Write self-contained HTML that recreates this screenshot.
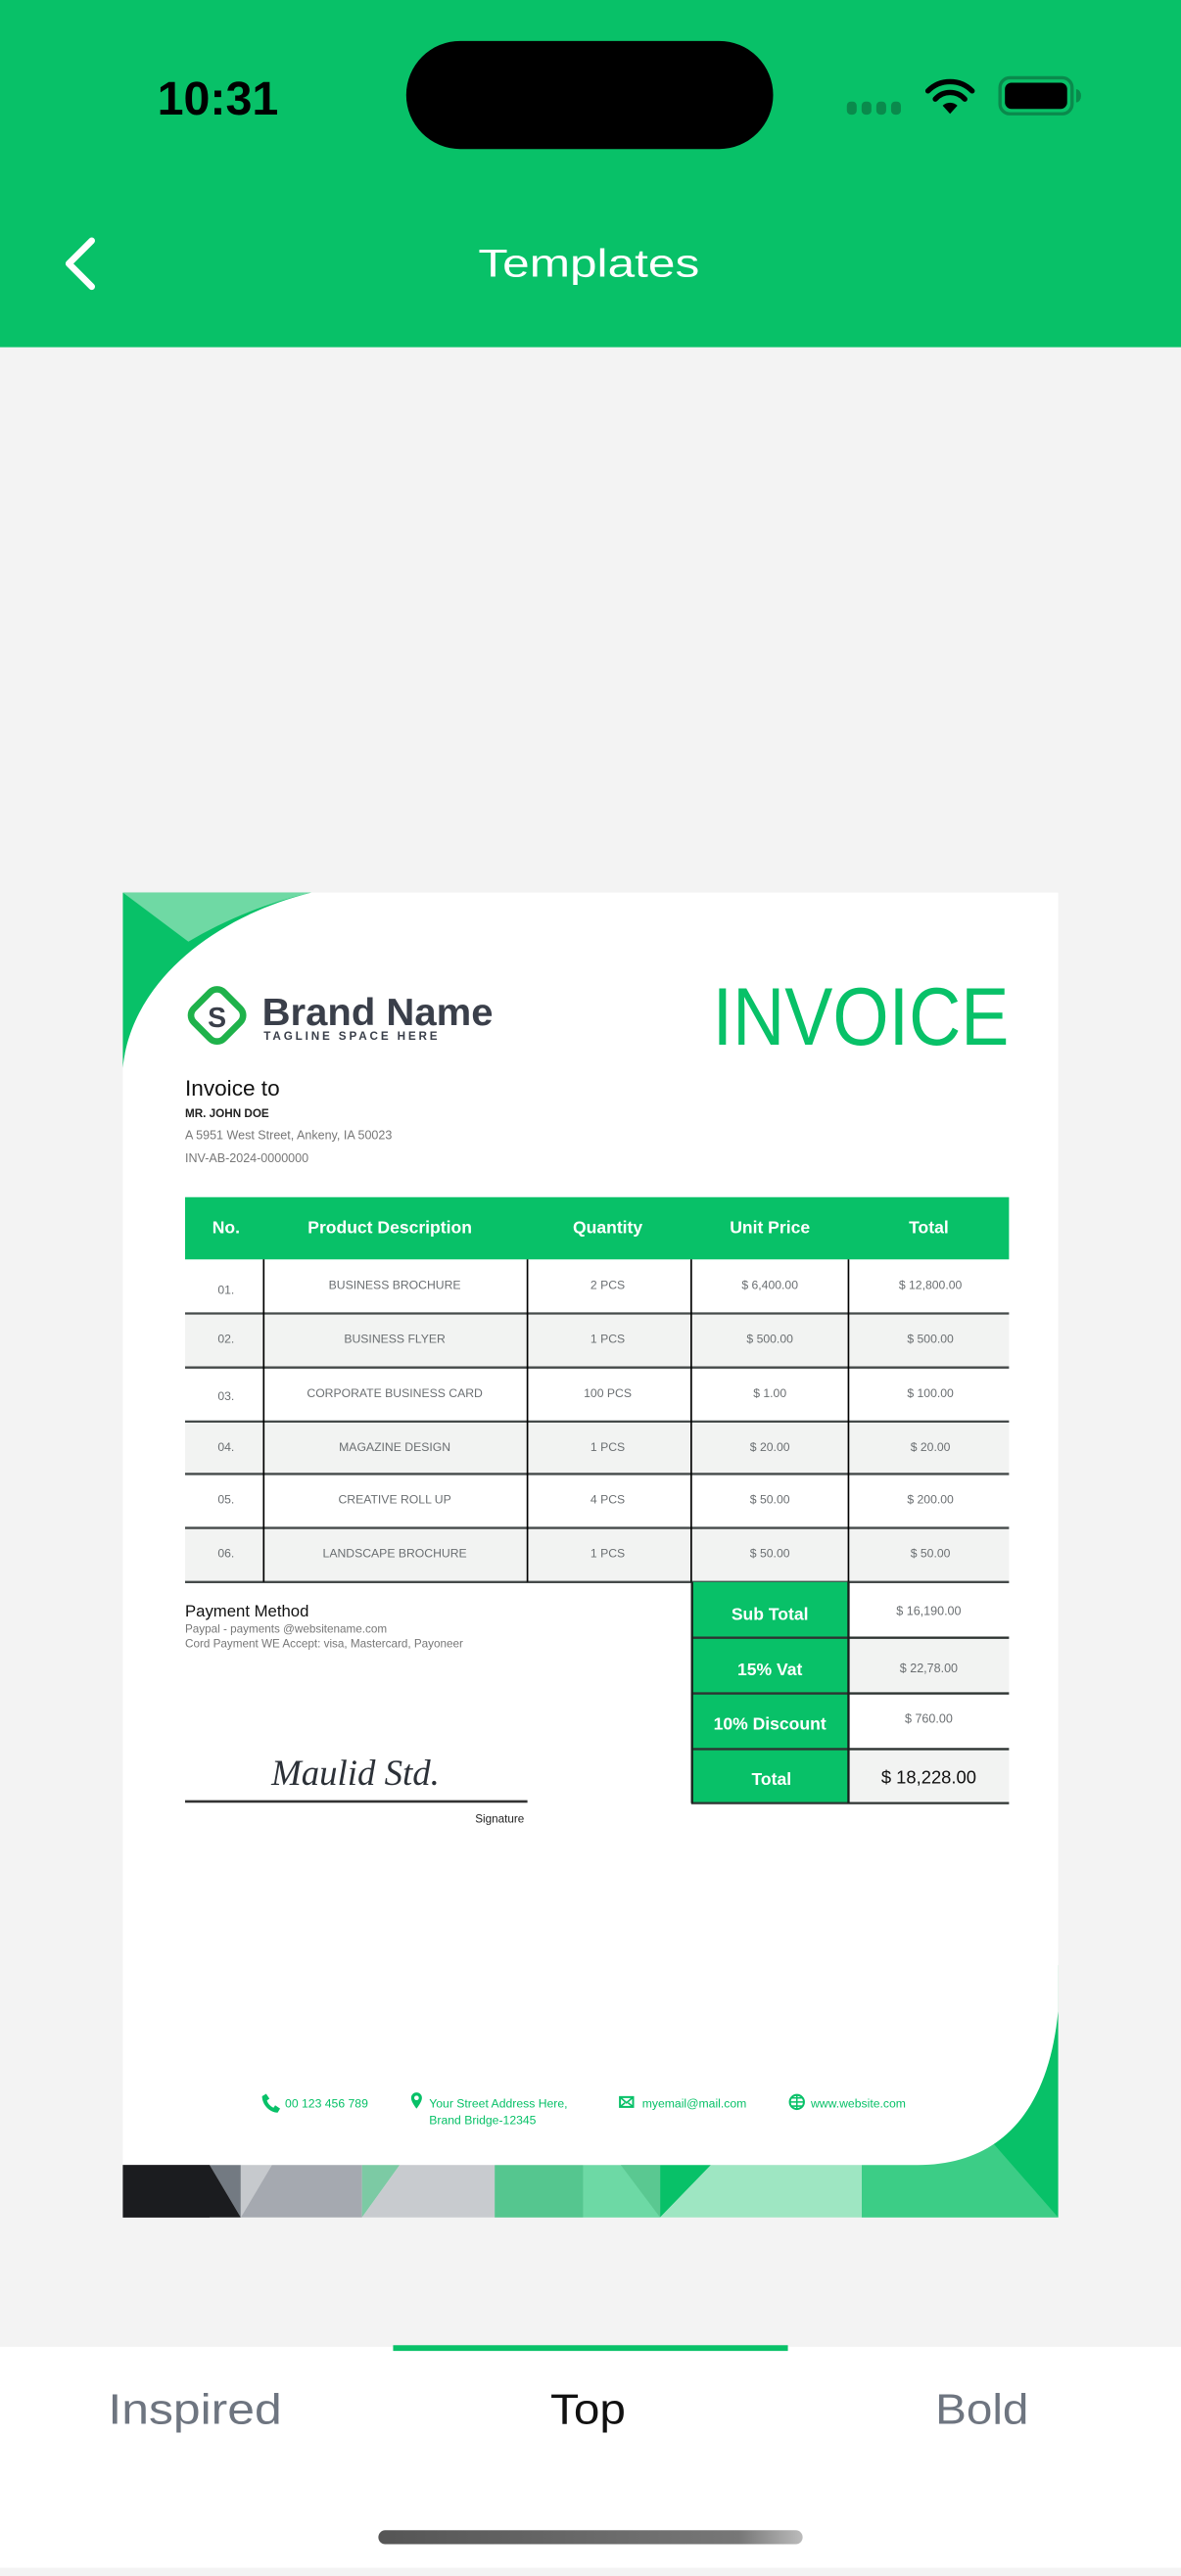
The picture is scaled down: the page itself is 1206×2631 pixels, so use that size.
<!DOCTYPE html>
<html><head><meta charset="utf-8"><style>
html,body{margin:0;padding:0;background:#f3f3f3;}
body{width:1206px;height:2622px;overflow:hidden;position:relative;}
#w{position:absolute;left:0;top:0;width:721px;height:1568px;transform:scale(1.672677);transform-origin:0 0;}
svg text{font-family:"Liberation Sans",sans-serif;}
</style></head><body><div id="w">
<svg width="721" height="1568" viewBox="0 0 721 1568" xmlns="http://www.w3.org/2000/svg">
<rect x="0" y="0" width="721" height="1568" fill="#f3f3f3"/>
<!-- header -->
<rect x="0" y="0" width="721" height="212" fill="#08c168"/>
<text x="96" y="70" font-size="29" font-weight="700" fill="#000" textLength="74" lengthAdjust="spacingAndGlyphs">10:31</text>
<rect x="248" y="25" width="224" height="66" rx="33" fill="#000"/>
<g fill="#0a8a4c"><rect x="517" y="62" width="6" height="8" rx="2.5"/><rect x="526" y="62" width="6" height="8" rx="2.5"/><rect x="535" y="62" width="6" height="8" rx="2.5"/><rect x="544" y="62" width="6" height="8" rx="2.5"/></g>
<g fill="none" stroke="#000" stroke-width="3.2" stroke-linecap="round">
<path d="M566.5 55.5 A19 19 0 0 1 593.5 55.5"/><path d="M571 60.5 A12 12 0 0 1 589 60.5"/></g>
<path d="M575.5 64.5 L580 69.5 L584.5 64.5 A6.5 6.5 0 0 0 575.5 64.5Z" fill="#000"/>
<rect x="610.5" y="47.5" width="44" height="22" rx="6" fill="none" stroke="#0a8a4c" stroke-width="2"/>
<rect x="613.5" y="50.5" width="38" height="16" rx="4" fill="#000"/>
<path d="M657 54.5 a3 4 0 0 1 0 8" fill="#0a8a4c"/>
<path d="M56 147 L42 161 L56 175" fill="none" stroke="#fff" stroke-width="4" stroke-linecap="round" stroke-linejoin="round"/>
<text x="292" y="169" font-size="24" fill="#fff" textLength="135" lengthAdjust="spacingAndGlyphs">Templates</text>

<!-- invoice -->
<!-- bottom right corner background -->
<rect x="526" y="1200" width="120" height="154" fill="#3ccd86"/>
<polygon points="646,1200 646,1354 575,1273 575,1200" fill="#08c168"/>
<path d="M75 545 H646 V1228 C640 1290 610 1322 560 1322 H75 Z" fill="#fff"/>
<path d="M75 545 H190 C130 560 80 600 75 652 Z" fill="#08c168"/>
<path d="M75 545 H190 C160 552 135 563 115 575 Z" fill="#6fd9a4"/>
<!-- strip -->
<g>
<rect x="75" y="1322" width="53" height="32" fill="#1b1c1f"/>
<polygon points="128,1322 147,1322 147,1354" fill="#737a82"/>
<polygon points="128,1322 147,1354 75,1354 75,1322" fill="#1b1c1f"/>
<polygon points="147,1322 166,1322 147,1354" fill="#c6c9cd"/>
<polygon points="166,1322 221,1322 221,1354 147,1354" fill="#a5a9b0"/>
<polygon points="221,1322 244,1322 221,1354" fill="#7ccaa4"/>
<polygon points="244,1322 302,1322 302,1354 221,1354" fill="#c8cbcf"/>
<rect x="302" y="1322" width="54" height="32" fill="#55c68f"/>
<rect x="356" y="1322" width="47" height="32" fill="#6dd9a5"/>
<polygon points="379,1322 403,1322 403,1354" fill="#5ac891"/>
<polygon points="403,1322 434,1322 403,1354" fill="#08c168"/>
<polygon points="434,1322 526,1322 526,1354 403,1354" fill="#9ee6c2"/>
</g>
<!-- logo -->
<g transform="translate(132.5 620) rotate(45)"><rect x="-13" y="-13" width="26" height="26" rx="6" fill="none" stroke="#1fb24b" stroke-width="4"/></g>
<text x="132.5" y="627" font-size="17" font-weight="700" fill="#3a3f4a" text-anchor="middle">S</text>
<text x="160" y="626" font-size="23" font-weight="700" fill="#3a3f4a" textLength="141" lengthAdjust="spacingAndGlyphs">Brand Name</text>
<text x="161" y="635" font-size="7" font-weight="700" fill="#3a3f4a" textLength="106" lengthAdjust="spacing">TAGLINE SPACE HERE</text>
<text x="435" y="638" font-size="50" fill="#08c168" textLength="181" lengthAdjust="spacingAndGlyphs">INVOICE</text>
<text x="113" y="669" font-size="13.5" fill="#111">Invoice to</text>
<text x="113" y="682" font-size="7" font-weight="700" fill="#222">MR. JOHN DOE</text>
<text x="113" y="695.5" font-size="7.5" fill="#777">A 5951 West Street, Ankeny, IA 50023</text>
<text x="113" y="709.5" font-size="7.5" fill="#777">INV-AB-2024-0000000</text>
<!-- table header -->
<rect x="113" y="731" width="503" height="38" fill="#08c168"/>
<g font-size="10.5" font-weight="700" fill="#fff" text-anchor="middle">
<text x="138" y="753">No.</text><text x="238" y="753">Product Description</text><text x="371" y="753">Quantity</text><text x="470" y="753">Unit Price</text><text x="567" y="753">Total</text></g>
<!-- rows -->
<rect x="113" y="802" width="503" height="33" fill="#f2f3f2"/>
<rect x="113" y="868" width="503" height="32" fill="#f2f3f2"/>
<rect x="113" y="933" width="503" height="33" fill="#f2f3f2"/>
<g stroke="#454a4a" stroke-width="1.4"><line x1="113" y1="802" x2="616" y2="802"/><line x1="113" y1="835" x2="616" y2="835"/><line x1="113" y1="868" x2="616" y2="868"/><line x1="113" y1="900" x2="616" y2="900"/><line x1="113" y1="933" x2="616" y2="933"/><line x1="113" y1="966" x2="616" y2="966"/></g>
<g stroke="#000" stroke-width="1"><line x1="161" y1="769" x2="161" y2="966"/><line x1="322" y1="769" x2="322" y2="966"/><line x1="422" y1="769" x2="422" y2="966"/><line x1="518" y1="769" x2="518" y2="966"/></g>
<g font-size="7.3" fill="#6b6f72" text-anchor="middle">
<text x="138" y="790">01.</text><text x="241" y="787">BUSINESS BROCHURE</text><text x="371" y="787">2 PCS</text><text x="470" y="787">$ 6,400.00</text><text x="568" y="787">$ 12,800.00</text>
<text x="138" y="820">02.</text><text x="241" y="820">BUSINESS FLYER</text><text x="371" y="820">1 PCS</text><text x="470" y="820">$ 500.00</text><text x="568" y="820">$ 500.00</text>
<text x="138" y="855">03.</text><text x="241" y="853">CORPORATE BUSINESS CARD</text><text x="371" y="853">100 PCS</text><text x="470" y="853">$ 1.00</text><text x="568" y="853">$ 100.00</text>
<text x="138" y="886">04.</text><text x="241" y="886">MAGAZINE DESIGN</text><text x="371" y="886">1 PCS</text><text x="470" y="886">$ 20.00</text><text x="568" y="886">$ 20.00</text>
<text x="138" y="918">05.</text><text x="241" y="918">CREATIVE ROLL UP</text><text x="371" y="918">4 PCS</text><text x="470" y="918">$ 50.00</text><text x="568" y="918">$ 200.00</text>
<text x="138" y="951">06.</text><text x="241" y="951">LANDSCAPE BROCHURE</text><text x="371" y="951">1 PCS</text><text x="470" y="951">$ 50.00</text><text x="568" y="951">$ 50.00</text>
</g>
<!-- summary -->
<rect x="422" y="966" width="96" height="135" fill="#08c168"/>
<rect x="518" y="1000" width="98" height="34" fill="#f2f3f2"/>
<rect x="518" y="1068" width="98" height="33" fill="#f2f3f2"/>
<g stroke="#2e3432" stroke-width="1.4"><line x1="422" y1="1000" x2="616" y2="1000"/><line x1="422" y1="1034" x2="616" y2="1034"/><line x1="422" y1="1068" x2="616" y2="1068"/><line x1="422" y1="1101" x2="616" y2="1101"/></g>
<g stroke="#1a1f1d" stroke-width="1.4"><line x1="422.5" y1="966" x2="422.5" y2="1101"/><line x1="518" y1="966" x2="518" y2="1101"/></g>
<g font-size="10.5" font-weight="700" fill="#fff" text-anchor="middle">
<text x="470" y="989">Sub Total</text><text x="470" y="1023">15% Vat</text><text x="470" y="1056">10% Discount</text><text x="471" y="1090">Total</text></g>
<g font-size="7.5" fill="#6b6f72" text-anchor="middle">
<text x="567" y="986">$ 16,190.00</text><text x="567" y="1021">$ 22,78.00</text><text x="567" y="1052">$ 760.00</text></g>
<text x="567" y="1089" font-size="11" fill="#111" text-anchor="middle">$ 18,228.00</text>
<!-- payment -->
<text x="113" y="987" font-size="10" fill="#111">Payment Method</text>
<text x="113" y="997" font-size="7" fill="#777">Paypal - payments @websitename.com</text>
<text x="113" y="1006" font-size="7" fill="#777">Cord Payment WE Accept: visa, Mastercard, Payoneer</text>
<text x="217" y="1090" font-size="22" font-style="italic" fill="#2c3138" text-anchor="middle" style="font-family:'Liberation Serif',serif">Maulid Std.</text>
<line x1="113" y1="1100" x2="322" y2="1100" stroke="#333" stroke-width="1.6"/>
<text x="320" y="1113" font-size="7" fill="#222" text-anchor="end">Signature</text>
<!-- contacts -->
<g fill="#08c168" font-size="7.3">
<path d="M160 1280 l2.5-1.5 2 3 -1.5 1 c0.5 2 2 3.5 4 4.5 l1-1.5 3 2 -1.5 2.5 c-5 0-9.5-5-9.5-10z"/>
<text x="174" y="1287">00 123 456 789</text>
<path d="M251 1281 a3.3 3.3 0 0 1 6.6 0 c0 2.5-3.3 6.5-3.3 6.5 s-3.3-4-3.3-6.5z M254.3 1279.6 a1.4 1.4 0 1 0 0.01 0z" fill-rule="evenodd"/>
<text x="262" y="1287">Your Street Address Here,</text>
<text x="262" y="1297">Brand Bridge-12345</text>
<rect x="378.5" y="1280.5" width="8" height="6" fill="none" stroke="#08c168" stroke-width="1.2"/>
<path d="M378.5 1280.5 l4 3.5 4-3.5 M378.5 1286.5 l3-2.5 M386.5 1286.5 l-3-2.5" stroke="#08c168" stroke-width="1" fill="none"/>
<text x="392" y="1287">myemail@mail.com</text>
<circle cx="486.5" cy="1283.5" r="4.3" fill="none" stroke="#08c168" stroke-width="1.2"/>
<path d="M482.2 1283.5 h8.6 M486.5 1279.2 v8.6 M483 1281 h7 M483 1286 h7" stroke="#08c168" stroke-width="0.9"/>
<text x="495" y="1287">www.website.com</text>
</g>

<!-- tabs -->
<rect x="0" y="1433" width="721" height="135" fill="#fff"/>
<rect x="240" y="1432" width="241" height="3.5" fill="#08c168"/>
<g font-size="26">
<text x="66" y="1480" fill="#6e7580" textLength="106" lengthAdjust="spacingAndGlyphs">Inspired</text>
<text x="336" y="1480" fill="#111" textLength="46" lengthAdjust="spacingAndGlyphs">Top</text>
<text x="571" y="1480" fill="#6e7580" textLength="57" lengthAdjust="spacingAndGlyphs">Bold</text></g>
<defs><linearGradient id="hg" x1="0" x2="1"><stop offset="0" stop-color="#555"/><stop offset="0.85" stop-color="#777"/><stop offset="1" stop-color="#bbb"/></linearGradient></defs>
<rect x="231" y="1545" width="259" height="8.5" rx="4.2" fill="url(#hg)"/>
</svg>
</div></body></html>
